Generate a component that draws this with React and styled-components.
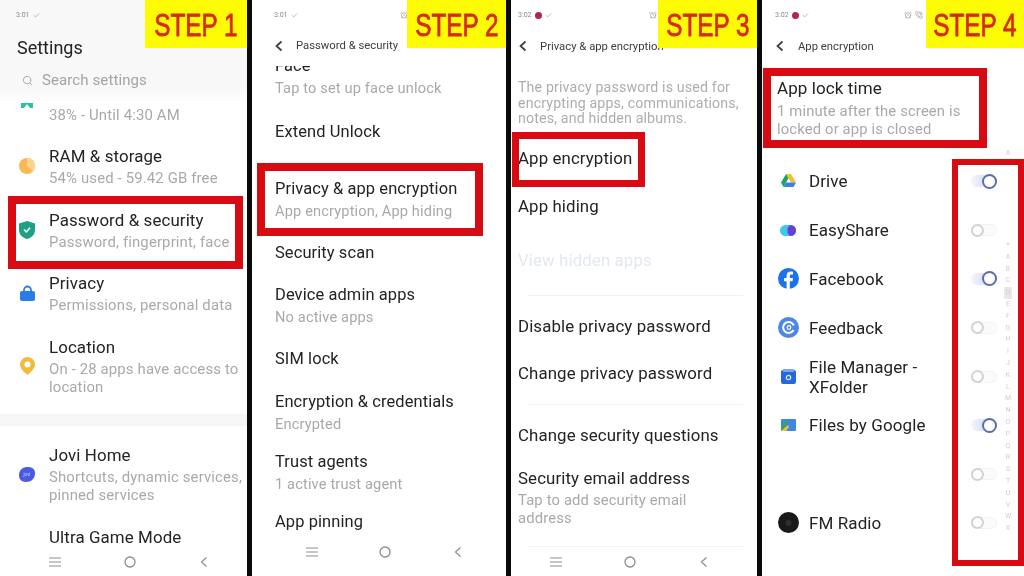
import React from "react";
import styled, { createGlobalStyle } from "styled-components";
import { Check, Search, AlarmClock, PhoneCall } from "lucide-react";

const Global = createGlobalStyle`
  html, body { margin: 0; padding: 0; background: #0a0a0a; }
  body { font-family: Roboto, "Liberation Sans", sans-serif; overflow: hidden; }
`;

const Page = styled.div`
  width: 1024px; height: 576px; display: flex; gap: 5px; background: #0a0a0a; overflow: hidden;
`;
const Panel = styled.section`
  --title: ${p => p.$title}px;
  --sub: ${p => p.$sub}px;
  position: relative; width: ${p => p.$w}px; height: 576px; flex: none; background: #fff;
  display: flex; flex-direction: column; overflow: hidden; filter: blur(0.4px);
`;
const Head = styled.header`
  height: ${p => p.$h}px; flex: none; background: ${p => p.$bg || "#fff"};
  display: flex; flex-direction: column;
`;
const Status = styled.div`
  height: 30px; flex: none; display: flex; align-items: center; gap: 3px;
  padding-left: ${p => p.$pl}px; font-size: 7px; color: #8b8b8b; position: relative;
`;
const StatusRight = styled.div`
  position: absolute; left: ${p => p.$x}px; top: 11px; display: flex; gap: 3px; color: #9a9a9a;
`;
const Dot = styled.span`
  width: 7px; height: 7px; border-radius: 50%; background: #b3244a;
`;
const Bar = styled.div`
  height: ${p => p.$h || 32}px; display: flex; align-items: center; gap: ${p => p.$gap}px; padding-left: ${p => p.$pl}px;
  font-size: 11.3px; color: #3c3c3c; white-space: nowrap;
`;
const Big = styled.h1`
  margin: 5px 0 0 17px; font-size: 18px; line-height: 26px; font-weight: 400; color: #222;
`;
const SearchRow = styled.div`
  margin: 7px 0 0 22px; height: 24px; display: flex; align-items: center; gap: 9px;
  font-size: 15px; color: #a4a4a4; letter-spacing: .1px;
`;
const List = styled.div`
  flex: 1; min-height: 0; overflow: hidden; padding-top: ${p => p.$pt || 0}px;
  padding-left: ${p => p.$pl || 0}px;
`;
const Row = styled.div`
  margin-top: ${p => p.$gap || 0}px; display: flex; align-items: center; gap: 12px;
`;
const IconBox = styled.span`
  width: 20px; height: 20px; flex: none; display: flex; align-items: center; justify-content: center;
  transform: translateY(${p => p.$lift || 0}px);
`;
const Title = styled.div`
  font-size: var(--title); line-height: 22px; color: #232323; white-space: nowrap; letter-spacing: .1px;
`;
const Sub = styled.div`
  font-size: var(--sub); line-height: 18px; margin-top: 2px; color: #a9a9a9; white-space: pre-line; letter-spacing: .15px;
`;
const Para = styled.p`
  margin: 0; font-size: 14.2px; line-height: 15.6px; color: #adadad; white-space: pre-line; letter-spacing: .15px;
`;
const Muted = styled(Title)`
  color: #e3e8ee;
`;
const Rule = styled.hr`
  border: 0; height: 1px; background: #f2f2f2; margin: ${p => p.$gap}px ${p => p.$r}px 0 ${p => p.$l}px;
`;
const Band = styled.div`
  height: 12px; margin-top: 18px; margin-left: -17px; background: #f7f7f7;
`;
const Nav = styled.nav`
  height: 28px; flex: none; margin-bottom: ${p => p.$mb || 0}px; padding-left: ${p => p.$pl}px;
  display: flex; align-items: center; gap: ${p => p.$gap}px; color: #8d8d8d; background: #fff;
`;
const Badge = styled.div`
  position: absolute; top: 0; right: 0; width: ${p => p.$w}px; height: 48px; background: #fdfc05;
  display: flex; align-items: center; justify-content: center; overflow: hidden;
`;
const BadgeText = styled.span`
  display: block; font-family: "Liberation Sans", sans-serif; font-size: 32px; font-weight: 400; line-height: 1;
  -webkit-text-stroke: .8px #d62a12;
  color: #d62a12; white-space: nowrap; transform: scaleX(.76); margin-top: 1px;
`;
const Mark = styled.div`
  position: absolute; left: ${p => p.$x}px; top: ${p => p.$y}px; width: ${p => p.$w}px; height: ${p => p.$h}px;
  box-sizing: border-box; border: ${p => p.$t}px solid #d80a12;
`;
const BlockWrap = styled.div`
  padding-left: 15px;
  ${Sub} { margin-top: 3px; }
`;
const Apps = styled.div`
  padding: 0 27px 0 15px; margin-top: 19px;
`;
const AppRow = styled.div`
  height: 48.8px; display: flex; align-items: center;
`;
const AppIcon = styled.span`
  width: 22px; height: 22px; flex: none; display: flex; align-items: center; justify-content: center;
`;
const AppName = styled(Title)`
  flex: 1; margin-left: 10px; line-height: 20px; white-space: pre-line;
`;
const Toggle = styled.span`
  position: relative; width: 26px; height: 12px; flex: none; border-radius: 7px;
  background: ${p => (p.$on ? "linear-gradient(90deg,#f5f6fc,#c3ccec)" : "#fbfbfb")};
  box-shadow: ${p => (p.$on ? "none" : "inset 0 0 0 1px #f3f3f3")};
  &::after {
    content: ""; position: absolute; box-sizing: border-box;
    top: ${p => (p.$on ? "-1.5px" : "-.5px")};
    left: ${p => (p.$on ? "11px" : "0")};
    width: ${p => (p.$on ? "15px" : "13px")}; height: ${p => (p.$on ? "15px" : "13px")};
    border-radius: 50%; background: #fff;
    border: ${p => (p.$on ? "2px solid #5b6fa8" : "2px solid #d2d2d2")};
  }
`;
const Index = styled.div`
  position: absolute; left: 240px; top: 240px; width: 12px; display: flex; flex-direction: column; align-items: center;
  font-size: 7px; line-height: 11.8px; color: #cdcdcd; text-align: center;
`;
const IndexTop = styled.div`
  position: absolute; left: 240px; top: 148px; width: 12px; font-size: 7px; line-height: 11px;
  color: #cdcdcd; text-align: center;
`;
const Letter = styled.span`
  width: 8px; background: ${p => (p.$on ? "#e8e8e8" : "transparent")};
`;

const Menu = () => (
  <svg width="12" height="10" viewBox="0 0 12 10" stroke="currentColor" strokeWidth="1.2"><path d="M0 1h12M0 5h12M0 9h12" /></svg>
);
const Ring = () => (
  <svg width="12" height="12" viewBox="0 0 12 12" fill="none" stroke="currentColor" strokeWidth="1.3"><circle cx="6" cy="6" r="5" /></svg>
);
const Back = ({ weight = 1.2 }) => (
  <svg width="12" height="12" viewBox="0 0 12 12" fill="none" stroke="currentColor" strokeWidth={weight}><path d="M8.500 1.500 3.500 6l5 4.500" /></svg>
);

const BatteryIcon = () => (
  <svg width="14" height="18" viewBox="0 0 14 18"><path d="M1 3h12v12H1z" fill="#29c39c" /><path d="M4 15 7 11l3 4z" fill="#fff" /></svg>
);
const RamIcon = () => (
  <svg width="16" height="16" viewBox="0 0 16 16"><circle cx="8" cy="8" r="8" fill="#f7ba52" /><path d="M8 0a8 8 0 0 1 6 13.3L8 8z" fill="#fbd58e" /></svg>
);
const ShieldIcon = () => (
  <svg width="16" height="18" viewBox="0 0 16 18"><path d="M8 0l8 2.500V9c0 4.500-3.400 7.600-8 9-4.600-1.400-8-4.500-8-9V2.500z" fill="#1f9f86" /><path d="M5 8.500 7.300 11 11 6.800" fill="none" stroke="#fff" strokeWidth="1.500" /></svg>
);
const LockIcon = () => (
  <svg width="15" height="16" viewBox="0 0 15 16"><path d="M4 7V5a3.500 3.500 0 0 1 7 0v2" fill="none" stroke="#2a7de8" strokeWidth="1.800" /><rect y="6" width="15" height="10" rx="2" fill="#2a7de8" /></svg>
);
const PinIcon = () => (
  <svg width="15" height="18" viewBox="0 0 15 18"><path d="M7.500 0A7.500 7.500 0 0 1 15 7.500c0 4-4 7.500-7.500 10.500C4 15 0 11.500 0 7.500A7.500 7.500 0 0 1 7.500 0z" fill="#f2bb3f" /><circle cx="7.500" cy="7.500" r="3" fill="#fff" /></svg>
);
const JoviIcon = () => (
  <svg width="16" height="15" viewBox="0 0 16 15"><path d="M8 0c5 0 8 1.500 8 6.500S12 15 7 15 0 12 0 8 3 0 8 0z" fill="#4a5ae2" /><text x="8" y="9" fontSize="4.500" fill="#cfd4ff" textAnchor="middle" fontFamily="Roboto">jovi</text></svg>
);
const DriveIcon = () => (
  <svg width="15" height="14" viewBox="0 0 15 14"><path d="M5 0h5l5 8.500h-5z" fill="#f6bf26" /><path d="M5 0l2.500 4.300L2.500 13 0 8.500z" fill="#1fa463" /><path d="M5 8.500h10L12.500 13h-10z" fill="#3f7fe8" /></svg>
);
const EasyIcon = () => (
  <svg width="16" height="11" viewBox="0 0 16 11"><rect width="16" height="11" rx="5.500" fill="#3dc9ee" /><path d="M10.500 0A5.500 5.500 0 0 1 10.500 11a5.500 5.500 0 0 1-3-5.500A5.500 5.500 0 0 1 10.500 0z" fill="#6a3fd6" /></svg>
);
const FacebookIcon = () => (
  <svg width="21" height="21" viewBox="0 0 21 21"><circle cx="10.500" cy="10.500" r="10.500" fill="#1a73e8" /><path d="M11.800 21v-7.800h2.700l.5-3.200h-3.200V8.200c0-1 .4-1.700 1.800-1.700H15V3.700c-.6-.1-1.500-.2-2.300-.2-2.500 0-4.100 1.500-4.100 4.200V10H6v3.200h2.600V21z" fill="#fff" /></svg>
);
const FeedbackIcon = () => (
  <svg width="21" height="21" viewBox="0 0 21 21"><circle cx="10.500" cy="10.500" r="10.500" fill="#4d88e4" /><path d="M15.500 13A5.500 5.500 0 1 1 15.800 8.500" fill="none" stroke="#fff" strokeWidth="2" /><circle cx="11" cy="10.500" r="1.800" fill="none" stroke="#fff" strokeWidth="1.200" /></svg>
);
const FolderIcon = () => (
  <svg width="15" height="15" viewBox="0 0 15 15"><rect y="1" width="15" height="14" rx="2" fill="#2468e0" /><rect x="2" width="11" height="3" rx="1" fill="#7ea6ef" /><circle cx="7.500" cy="8.500" r="2.200" fill="none" stroke="#dfe9fb" strokeWidth="1.200" /></svg>
);
const FilesIcon = () => (
  <svg width="15" height="12" viewBox="0 0 15 12"><rect width="15" height="12" rx="1" fill="#3f86e6" /><path d="M0 12V7l7-6v3z" fill="#36a852" /><path d="M0 12l7-6 1 2-3 4z" fill="#f5c02c" /></svg>
);
const RadioIcon = () => (
  <svg width="21" height="21" viewBox="0 0 21 21"><circle cx="10.500" cy="10.500" r="10.500" fill="#191919" /><circle cx="10.500" cy="11" r="3" fill="#2e2e2e" /></svg>
);

const Step = ({ w, n }) => (
  <Badge $w={w}><BadgeText>STEP {n}</BadgeText></Badge>
);
const SettingRow = ({ gap, icon, lift, title, sub }) => (
  <Row $gap={gap}>
    {icon && <IconBox $lift={lift}>{icon}</IconBox>}
    <div>
      {title && <Title>{title}</Title>}
      {sub && <Sub>{sub}</Sub>}
    </div>
  </Row>
);
const BottomNav = ({ pl, mb, gap }) => (
  <Nav $pl={pl} $mb={mb} $gap={gap}><Menu /><Ring /><Back /></Nav>
);
const Clock = ({ x, phone }) => (
  <StatusRight $x={x}>
    <AlarmClock size={8} />
    {phone && <PhoneCall size={8} />}
  </StatusRight>
);

const apps = [
  { name: "Drive", icon: <DriveIcon />, on: true },
  { name: "EasyShare", icon: <EasyIcon /> },
  { name: "Facebook", icon: <FacebookIcon />, on: true },
  { name: "Feedback", icon: <FeedbackIcon /> },
  { name: "File Manager -\nXFolder", icon: <FolderIcon /> },
  { name: "Files by Google", icon: <FilesIcon />, on: true },
  { name: "", icon: null },
  { name: "FM Radio", icon: <RadioIcon /> },
];
const letters = ["*", ..."ABCDEFGHIJKLMNOPQRSTUVWX"];

export default function App() {
  return (
    <Page>
      <Global />
      <Panel $w={247} $title={16.9} $sub={14.9}>
        <Head $h={103} $bg="linear-gradient(#f8f8f8 85%, #fefefe)">
          <Status $pl={16}>3:01 <Check size={7} /></Status>
          <Big>Settings</Big>
          <SearchRow><Search size={11} />Search settings</SearchRow>
        </Head>
        <List $pl={17} $pt={1}>
          <SettingRow icon={<BatteryIcon />} lift={-12} sub="38% - Until 4:30 AM" />
          <SettingRow gap={21} icon={<RamIcon />} title="RAM & storage" sub="54% used - 59.42 GB free" />
          <SettingRow gap={22} icon={<ShieldIcon />} title="Password & security" sub="Password, fingerprint, face" />
          <SettingRow gap={21} icon={<LockIcon />} title="Privacy" sub="Permissions, personal data" />
          <SettingRow gap={22} icon={<PinIcon />} title="Location" sub={"On - 28 apps have access to\nlocation"} />
          <Band />
          <SettingRow gap={18} icon={<JoviIcon />} title="Jovi Home" sub={"Shortcuts, dynamic services,\npinned services"} />
          <SettingRow gap={22} icon={<span />} title="Ultra Game Mode" />
        </List>
        <BottomNav pl={49} gap={62.5} />
        <Step w={102} n={1} />
        <Mark $x={8} $y={196} $w={235} $h={73} $t={8} />
      </Panel>

      <Panel $w={254} $title={16.45} $sub={14.6}>
        <Head $h={66}>
          <Status $pl={22}>3:01 <Check size={7} /><Clock x={148} /></Status>
          <Bar $h={31} $pl={21} $gap={11}><Back weight={1.7} />Password &amp; security</Bar>
        </Head>
        <List $pl={23}>
          <SettingRow gap={-11} title="Face" sub="Tap to set up face unlock" />
          <SettingRow gap={24} title="Extend Unlock" />
          <SettingRow gap={35} title="Privacy & app encryption" sub="App encryption, App hiding" />
          <SettingRow gap={22} title="Security scan" />
          <SettingRow gap={20} title="Device admin apps" sub="No active apps" />
          <SettingRow gap={22} title="SIM lock" />
          <SettingRow gap={21} title="Encryption & credentials" sub="Encrypted" />
          <SettingRow gap={18} title="Trust agents" sub="1 active trust agent" />
          <SettingRow gap={18} title="App pinning" sub="Off" />
        </List>
        <BottomNav pl={54} mb={10} gap={61} />
        <Step w={99} n={2} />
        <Mark $x={5} $y={163} $w={226} $h={73} $t={8} />
      </Panel>

      <Panel $w={246} $title={16.85} $sub={14.8}>
        <Head $h={66}>
          <Status $pl={7}>3:02 <Dot /><Check size={7} /><Clock x={138} /></Status>
          <Bar $pl={6} $gap={11}><Back weight={1.7} />Privacy &amp; app encryption</Bar>
        </Head>
        <List $pl={7} $pt={14}>
          <Para>{"The privacy password is used for\nencrypting apps, communications,\nnotes, and hidden albums."}</Para>
          <SettingRow gap={20} title="App encryption" />
          <SettingRow gap={26} title="App hiding" />
          <Row $gap={32}><Muted>View hidden apps</Muted></Row>
          <Rule $gap={24} $l={10} $r={14} />
          <SettingRow gap={19} title="Disable privacy password" />
          <SettingRow gap={25} title="Change privacy password" />
          <Rule $gap={20} $l={10} $r={14} />
          <SettingRow gap={19} title="Change security questions" />
          <SettingRow gap={21} title="Security email address" sub={"Tap to add security email\naddress"} />
          <Rule $gap={19} $l={10} $r={14} />
        </List>
        <BottomNav pl={39} gap={62} />
        <Step w={99} n={3} />
        <Mark $x={1} $y={132} $w={133} $h={55} $t={7} />
      </Panel>

      <Panel $w={262} $title={17} $sub={14.8}>
        <Head $h={66}>
          <Status $pl={13}>3:02 <Dot /><Check size={7} /><Clock x={142} phone /></Status>
          <Bar $pl={12} $gap={12}><Back weight={1.7} />App encryption</Bar>
        </Head>
        <List $pt={11}>
          <BlockWrap>
            <Title>App lock time</Title>
            <Sub>{"1 minute after the screen is\nlocked or app is closed"}</Sub>
          </BlockWrap>
          <Apps>
            {apps.map(a => (
              <AppRow key={a.name || "blank"}>
                <AppIcon>{a.icon}</AppIcon>
                <AppName>{a.name}</AppName>
                <Toggle $on={a.on} />
              </AppRow>
            ))}
          </Apps>
        </List>
        <Step w={98} n={4} />
        <Mark $x={1} $y={68} $w={224} $h={80} $t={8} />
        <IndexTop>A</IndexTop>
        <Index>{letters.map(l => <Letter key={l} $on={l === "D"}>{l}</Letter>)}</Index>
        <Mark $x={190} $y={159} $w={72} $h={407} $t={6} />
      </Panel>
    </Page>
  );
}
